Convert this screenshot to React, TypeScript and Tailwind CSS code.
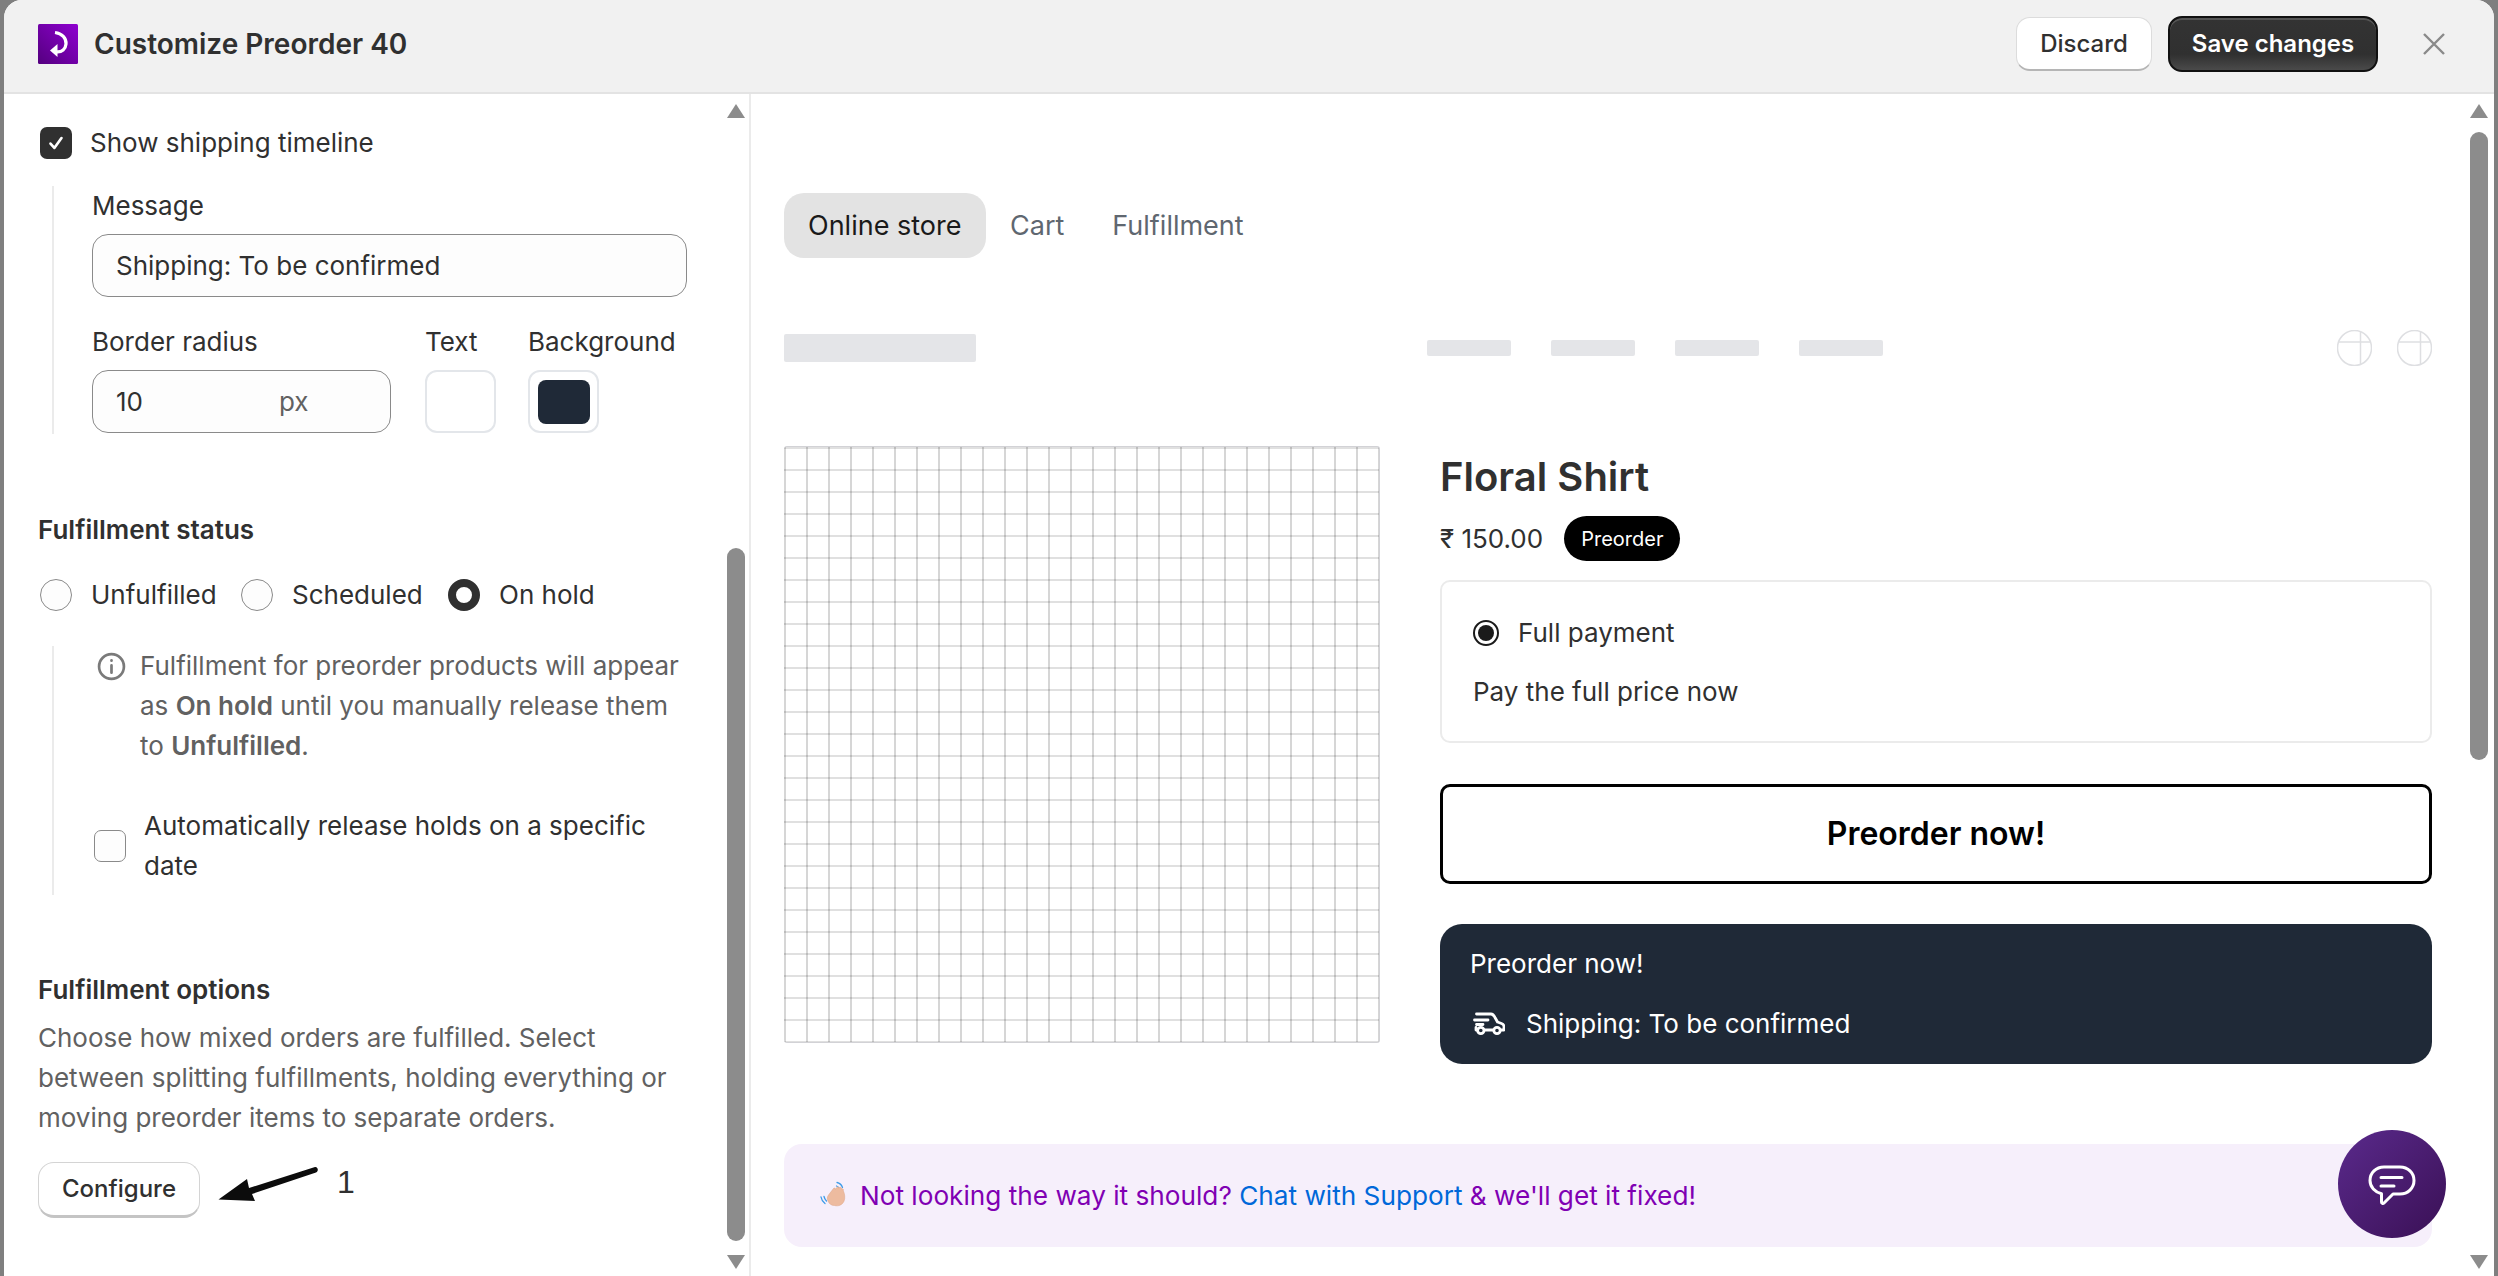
const sans = "font-['Inter',sans-serif]";

function Scrollbar({ thumb }: { thumb: string }) {
  return (
    <div className="flex w-[18px] shrink-0 flex-col items-center">
      <div className="mt-[10px] h-0 w-0 border-x-[9px] border-b-[14px] border-x-transparent border-b-[#8c8c8c]" />
      <div className="flex-1">
        <div className={`w-[18px] rounded-full bg-[#8c8c8c] ${thumb}`} />
      </div>
      <div className="mb-[7px] h-0 w-0 border-x-[9px] border-t-[14px] border-x-transparent border-t-[#8c8c8c]" />
    </div>
  );
}

function Radio({ checked }: { checked?: boolean }) {
  return checked ? (
    <span className="h-[32px] w-[32px] shrink-0 rounded-full border-[8px] border-[#303030] bg-white" />
  ) : (
    <span className="h-[32px] w-[32px] shrink-0 rounded-full border border-[#8a8a8a] bg-[#fdfdfd]" />
  );
}

function Logo() {
  return (
    <svg viewBox="0 0 40 40" className="h-[40px] w-[40px] shrink-0">
      <defs>
        <linearGradient id="logo" x1="1" y1="0" x2="0" y2="1">
          <stop offset="0" stopColor="#8f00d0" />
          <stop offset="1" stopColor="#54007f" />
        </linearGradient>
      </defs>
      <rect width="40" height="40" rx="1.5" fill="url(#logo)" />
      <path d="M17 8.5c7 1 11.5 5.5 11 11.5-.4 5-4 8.300-9.500 7.800" fill="none" stroke="#fff" strokeWidth="3.200" />
      <path d="M12 26.500 19.500 20v13z" fill="#fff" />
    </svg>
  );
}

function Truck() {
  return (
    <svg viewBox="0 0 32 24" className="h-[24px] w-[32px] shrink-0" fill="none" stroke="#fff" strokeWidth="2.800" strokeLinecap="round" strokeLinejoin="round">
      <path d="M3.500 2H18c2 0 3 1.500 4 3.500L24.500 10l4 1.500c1.500.6 2.500 1.500 2.500 3V18h-3M20 18h-8.500M1.500 8H15M3.500 12.500H10M3 15.500V18h1" />
      <circle cx="7.800" cy="18.500" r="3.200" />
      <circle cx="24" cy="18.500" r="3.200" />
    </svg>
  );
}

function WaveHand() {
  return (
    <svg viewBox="0 0 30 30" className="h-[30px] w-[30px] shrink-0">
      <path d="M1 16c.5 3 2 5 4 6.500M4 15.500c.5 2 1.200 3.200 2.500 4.500" fill="none" stroke="#3b9be8" strokeWidth="1.300" strokeLinecap="round" />
      <path d="M17 1.500c2.500.5 4.500 2.300 5.500 5M16.500 5c1.300.4 2.300 1.300 3 2.800" fill="none" stroke="#3b9be8" strokeWidth="1.300" strokeLinecap="round" />
      <path d="M8 20c-1-2-1-4 .5-6l5-6.500c.8-1 2.300-.2 1.800 1l1.700-2.300c.8-1 2.400-.2 1.800 1.100l.9-.8c1-.8 2.300.3 1.600 1.500l.6-.2c1.200-.3 1.900.8 1.400 1.900 1.600 3.500 2 7.500.7 10.500-1.500 3.500-5.500 5.500-9.500 4.300C11 24.500 9.300 22.800 8 20z" fill="#edbb9f" stroke="#dca283" strokeWidth=".5" />
    </svg>
  );
}

function ChatIcon() {
  return (
    <svg viewBox="0 0 48 48" className="mt-[5px] h-[48px] w-[48px]" fill="none" stroke="#fff" strokeWidth="3" strokeLinecap="round" strokeLinejoin="round">
      <path d="M16 4h16c8 0 14 6 14 13.500S40 31 32 31h-7l-9 9c-1 1-2.500.5-2.500-1v-8.300C7 29 2 24 2 17.500 2 10 8 4 16 4z" />
      <path d="M13 14.500h21M13 23h13" />
    </svg>
  );
}

function SettingsPanel() {
  return (
    <aside className="flex w-[747px] shrink-0 border-r-2 border-[#ebebeb] text-[26px] leading-[40px] text-[#303030]">
      <div className="flex-1 pl-[34px] pr-[32px]">
        <label className="ml-[2px] mt-[29px] flex items-center gap-[18px]">
          <span className="flex h-[32px] w-[32px] items-center justify-center rounded-[7px] bg-[#303030]">
            <svg viewBox="0 0 20 20" className="h-[22px] w-[22px]" fill="none" stroke="#fff" strokeWidth="2.400" strokeLinecap="round" strokeLinejoin="round">
              <path d="M5 10.500 8.500 14.500 15 5.500" />
            </svg>
          </span>
          Show shipping timeline
        </label>

        <div className="ml-[14px] mt-[23px] h-[248px] border-l-2 border-[#ebebeb] pl-[38px]">
          <div>Message</div>
          <div className="mt-[8px] flex h-[63px] w-[595px] items-center rounded-[16px] border border-[#8a8a8a] bg-[#fdfdfd] px-[23px]">
            Shipping: To be confirmed
          </div>
          <div className="mt-[25px] flex">
            <div className="w-[333px]">
              <div>Border radius</div>
              <div className="mt-[8px] flex h-[63px] w-[299px] items-center rounded-[16px] border border-[#8a8a8a] bg-[#fdfdfd] pl-[23px]">
                <span className="w-[163px]">10</span>
                <span className="text-[#616161]">px</span>
              </div>
            </div>
            <div className="w-[103px]">
              <div>Text</div>
              <div className="mt-[8px] h-[63px] w-[71px] rounded-[12px] border-2 border-[#e3e6ea] bg-white" />
            </div>
            <div className="whitespace-nowrap">
              <div>Background</div>
              <div className="mt-[8px] flex h-[63px] w-[71px] items-center justify-center rounded-[12px] border-2 border-[#e3e6ea] bg-white">
                <span className="h-[44px] w-[52px] rounded-[8px] bg-[#1f2937]" />
              </div>
            </div>
          </div>
        </div>

        <h3 className="mt-[76px] font-semibold">Fulfillment status</h3>
        <div className="ml-[2px] mt-[25px] flex items-center">
          <Radio />
          <span className="ml-[19px] w-[150px]">Unfulfilled</span>
          <Radio />
          <span className="ml-[19px] w-[156px]">Scheduled</span>
          <Radio checked />
          <span className="ml-[19px]">On hold</span>
        </div>

        <div className="ml-[14px] mt-[31px] h-[249px] border-l-2 border-[#ebebeb] pl-[43px]">
          <div className="flex gap-[14px] text-[#616161]">
            <svg viewBox="0 0 28 28" className="mt-[6px] h-[29px] w-[29px] shrink-0" fill="none" stroke="#7a7a7a" strokeWidth="2.600" strokeLinecap="round">
              <circle cx="14" cy="14" r="12" />
              <path d="M14 13v7M14 8v.4" />
            </svg>
            <p>
              Fulfillment for preorder products will appear as <b className="font-semibold">On hold</b> until you manually release them to <b className="font-semibold">Unfulfilled</b>.
            </p>
          </div>
          <label className="-ml-[3px] mt-[40px] flex items-center gap-[18px]">
            <span className="h-[32px] w-[32px] shrink-0 rounded-[7px] border border-[#8a8a8a] bg-[#fdfdfd]" />
            <span>Automatically release holds on a specific date</span>
          </label>
        </div>

        <h3 className="mt-[75px] font-semibold">Fulfillment options</h3>
        <p className="mt-[8px] text-[#616161]">
          Choose how mixed orders are fulfilled. Select between splitting fulfillments, holding everything or moving preorder items to separate orders.
        </p>
        <div className="mt-[24px] flex items-start">
          <button className="h-[56px] w-[162px] shrink-0 rounded-[16px] border border-[#d4d4d4] border-b-[3px] border-b-[#c4c4c4] bg-white text-[24px] font-medium">
            Configure
          </button>
          <svg viewBox="0 0 110 40" className="ml-[13px] mt-[4px] h-[40px] w-[110px] shrink-0" fill="#0c0c0c">
            <path d="M5.500 33.500 34 13l2 9L102 1c3-.5 4 4.500 1 5.500L39 28l3 7z" />
          </svg>
          <span className="ml-[14px] font-['Liberation_Sans',sans-serif] text-[32px] leading-[40px]">1</span>
        </div>
      </div>
      <div className="mr-[4px] flex">
        <Scrollbar thumb="mt-[430px] h-[693px]" />
      </div>
    </aside>
  );
}

function Preview() {
  return (
    <main className="flex min-w-0 flex-1">
      <div className="w-[1681px] shrink-0 pl-[33px] text-[26px] leading-[40px] text-[#303030]">
        <nav className="mt-[99px] flex h-[65px] items-center text-[27px] text-[#5f6770]">
          <span className="flex h-[65px] w-[202px] items-center rounded-[20px] bg-[#e3e3e3] pl-[24px] text-[#1a1a1a]">Online store</span>
          <span className="ml-[24px]">Cart</span>
          <span className="ml-[48px]">Fulfillment</span>
        </nav>

        <div className="mt-[72px] flex h-[36px] w-[1648px] items-center">
          <div className="h-[28px] w-[192px] rounded-[2px] bg-[#e4e5e8]" />
          <div className="ml-[451px] flex gap-[40px]">
            <div className="h-[16px] w-[84px] rounded-[2px] bg-[#e4e5e8]" />
            <div className="h-[16px] w-[84px] rounded-[2px] bg-[#e4e5e8]" />
            <div className="h-[16px] w-[84px] rounded-[2px] bg-[#e4e5e8]" />
            <div className="h-[16px] w-[84px] rounded-[2px] bg-[#e4e5e8]" />
          </div>
          <div className="ml-auto flex gap-[25px]">
            {[0, 1].map((i) => (
              <svg key={i} viewBox="0 0 35 36" className="h-[36px] w-[35px]" fill="none" stroke="#dedfe2" strokeWidth="1.500">
                <ellipse cx="17.500" cy="18" rx="17" ry="17.500" />
                <path d="M1 12h33M23.500 1v34" />
              </svg>
            ))}
          </div>
        </div>

        <div className="mt-[80px] flex gap-[60px]">
          <div className="h-[597px] w-[596px] shrink-0 rounded-[3px] border-t border-r border-b border-[#d2d2d6] bg-[linear-gradient(to_right,#00000029_2px,transparent_2px),linear-gradient(to_bottom,#0000001f_2px,transparent_2px)] bg-[size:22px_22px]" />
          <div className="w-[992px]">
            <h2 className="mt-[9px] text-[40px] font-semibold leading-[44px]">Floral Shirt</h2>
            <div className="mt-[17px] flex h-[45px] items-center gap-[21px]">
              <span>₹ 150.00</span>
              <span className="flex h-[45px] items-center rounded-full bg-black px-[17px] text-[20px] text-white">Preorder</span>
            </div>
            <div className="mt-[19px] h-[163px] rounded-[10px] border-2 border-[#ebebeb] px-[31px] pt-[31px]">
              <div className="flex items-center gap-[19px]">
                <span className="flex h-[26px] w-[26px] items-center justify-center rounded-full border-2 border-[#1a1a1a]">
                  <span className="h-[16px] w-[16px] rounded-full bg-[#1a1a1a]" />
                </span>
                Full payment
              </div>
              <div className="mt-[19px]">Pay the full price now</div>
            </div>
            <button className="mt-[41px] h-[100px] w-full rounded-[10px] border-[3px] border-black text-[32px] font-semibold text-black">
              Preorder now!
            </button>
            <div className="mt-[40px] h-[140px] rounded-[22px] bg-[#1f2937] pl-[30px] pt-[20px] text-white">
              <div>Preorder now!</div>
              <div className="mt-[20px] flex items-center gap-[21px] pl-[3px]">
                <Truck />
                Shipping: To be confirmed
              </div>
            </div>
          </div>
        </div>

        <div className="mt-[80px] flex h-[103px] w-[1648px] items-center gap-[10px] rounded-[18px] bg-[#f6effb] pl-[36px] text-[26.200px] text-[#8000b3]">
          <WaveHand />
          <span>
            Not looking the way it should? <span className="text-[#0068d9]">Chat with Support</span> &amp; we'll get it fixed!
          </span>
        </div>
      </div>
      <div className="ml-[38px] flex">
        <Scrollbar thumb="mt-[14px] h-[628px]" />
      </div>
      <button className="absolute left-[2338px] top-[1130px] flex h-[108px] w-[108px] items-center justify-center rounded-full bg-[linear-gradient(135deg,#5a2a8c,#3a1055)]">
        <ChatIcon />
      </button>
    </main>
  );
}

export default function App() {
  return (
    <div className={`relative h-[1276px] w-[2498px] overflow-hidden bg-[#7f7f7f] px-[4px] ${sans}`}>
      <div className="flex h-full flex-col overflow-hidden rounded-t-[18px] bg-white">
        <header className="flex h-[94px] shrink-0 items-center border-b-2 border-[#e3e3e3] bg-[#f1f1f1] pb-[4px] pl-[34px]">
          <Logo />
          <h1 className="ml-[16px] text-[28px] font-semibold text-[#303030]">Customize Preorder 40</h1>
          <button className="ml-auto h-[54px] w-[136px] rounded-[14px] border border-[#dcdcdc] border-b-2 border-b-[#b5b5b5] bg-white text-[24px] font-medium text-[#303030]">
            Discard
          </button>
          <button className="ml-[16px] h-[56px] w-[210px] rounded-[14px] border-2 border-[#111] bg-[linear-gradient(#333,#303030_70%,#4a4a4a)] text-[24px] font-semibold text-white shadow-[inset_0_2px_0_#555]">
            Save changes
          </button>
          <svg viewBox="0 0 24 24" className="ml-[44px] mr-[48px] h-[24px] w-[24px]" fill="none" stroke="#8a8a8a" strokeWidth="2.400">
            <path d="M2 2l20 20M22 2 2 22" />
          </svg>
        </header>
        <div className="flex min-h-0 flex-1">
          <SettingsPanel />
          <Preview />
        </div>
      </div>
    </div>
  );
}
